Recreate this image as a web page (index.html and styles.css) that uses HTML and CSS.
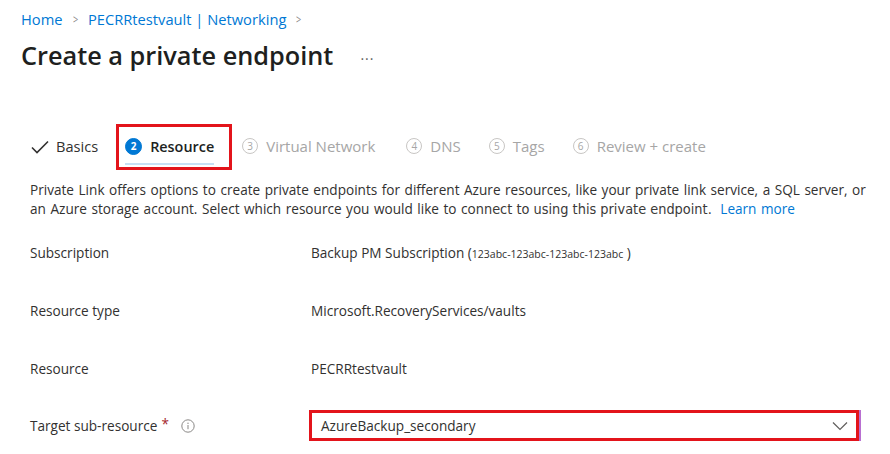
FILE: index.html
```html
<!DOCTYPE html>
<html>
<head>
<meta charset="utf-8">
<link rel="stylesheet" href="styles.css">
</head>
<body>
<div class="page">
  <nav class="crumbs">
    <a class="crumb">Home</a><span class="sep">&gt;</span>
    <a class="crumb">PECRRtestvault | Networking</a><span class="sep">&gt;</span>
  </nav>
  <header class="title-row">
    <h1 class="title">Create a private endpoint</h1>
    <span class="more">···</span>
  </header>

  <div class="tabs">
    <div class="tab done">
      <svg class="check" viewBox="0 0 18 14" width="18" height="14"><path d="M1 7.5 L6 12.5 L17 1.5" fill="none" stroke="#323130" stroke-width="1.6"/></svg>
      <span>Basics</span>
    </div>
    <div class="tab active">
      <span class="num filled">2</span>
      <span>Resource</span>
    </div>
    <div class="tab off"><span class="num">3</span><span>Virtual Network</span></div>
    <div class="tab off"><span class="num">4</span><span>DNS</span></div>
    <div class="tab off"><span class="num">5</span><span>Tags</span></div>
    <div class="tab off"><span class="num">6</span><span>Review + create</span></div>
  </div>

  <p class="intro">Private Link offers options to create private endpoints for different Azure resources, like your private link service, a SQL server, or an Azure storage account. Select which resource you would like to co<span class="odd">nnect to using this private endpoint.</span> <a class="link">Learn more</a></p>

  <div class="rows">
    <div class="row"><div class="label">Subscription</div><div class="value">Backup PM Subscription (<span class="small">123abc-123abc-123abc-123abc</span> )</div></div>
    <div class="row"><div class="label">Resource type</div><div class="value">Microsoft.RecoveryServices/vaults</div></div>
    <div class="row"><div class="label">Resource</div><div class="value">PECRRtestvault</div></div>
    <div class="row"><div class="label">Target sub-resource <span class="req">*</span>
      <svg class="info" viewBox="0 0 14 14" width="14" height="14"><circle cx="7" cy="7" r="6.2" fill="none" stroke="#8a8886" stroke-width="1"/><rect x="6.5" y="6" width="1" height="4.2" fill="#8a8886"/><circle cx="7" cy="4.2" r="0.7" fill="#8a8886"/></svg></div>
      <div class="select"><span>AzureBackup_secondary</span>
        <svg class="chev" viewBox="0 0 16 10" width="16" height="10"><path d="M1 1.5 L8 8.5 L15 1.5" fill="none" stroke="#605e5c" stroke-width="1.2"/></svg>
      </div>
    </div>
  </div>
</div>
</body>
</html>
```

FILE: styles.css
```css
* { box-sizing: border-box; }
html, body { margin: 0; padding: 0; background: #fff; }
body {
  font-family: "Open Sans", "Noto Sans", sans-serif;
  font-size: 13.6px;
  color: #323130;
  width: 890px;
  height: 454px;
  overflow: hidden;
}
.page { padding: 8px 0 0 21px; }
.crumbs { display: flex; align-items: center; height: 22px; font-size: 14.7px; }
.crumb { color: #0078d4; }
.sep { color: #8a8886; margin: 0 9px; font-size: 13px; transform: scaleX(0.7); display: inline-block; }
.title-row { display: flex; align-items: center; margin-top: 8px; height: 34px; }
.title { margin: 0; font-size: 25.3px; font-weight: 600; color: #201f1e; }
.more { margin-left: 27px; color: #605e5c; font-size: 14px; letter-spacing: 1px; margin-top: 6px; }

.tabs { display: flex; align-items: center; margin-top: 61px; padding-left: 10px; height: 26px; }
.tab { display: flex; align-items: center; gap: 8px; font-size: 14.6px; position: relative; }
.tab.done { margin-right: 29px; gap: 7px; }
.tab.done .check { margin-top: 1px; }
.tab.active { color: #201f1e; font-weight: 600; margin-right: 29px; font-size: 14.4px; left: -2px; }
.tab.active::before {
  content: ""; position: absolute; left: -9px; right: -18px; top: -13px; bottom: -14px;
  border: 3px solid #e3141b;
}
.tab.active::after {
  content: ""; position: absolute; left: 0; right: 0; bottom: -9px; height: 2px; background: #c7e0f4;
}
.tab.off { color: #a6a6a6; font-size: 15px; }
.tab.off:nth-child(3) { margin-left: -3px; margin-right: 31px; }
.tab.off:nth-child(4) { margin-right: 28px; }
.tab.off:nth-child(5) { margin-right: 28px; }
.num {
  width: 16px; height: 16px; border-radius: 50%; border: 1px solid #c8c6c4;
  display: inline-flex; align-items: center; justify-content: center;
  font-size: 10px; font-weight: 400; color: #a6a6a6;
}
.num.filled { width: 17px; height: 17px; background: #0078d4; border-color: #0078d4; color: #fff; font-weight: 700; }

.intro { margin: 21px 0 0 9px; width: 846px; line-height: 19px; word-spacing: 1px; }
.odd { font-family: "DejaVu Sans Condensed", "DejaVu Sans", sans-serif; font-stretch: condensed; font-size: 14.4px; line-height: 14px; color: #3b3a39; word-spacing: 0; }
.link { color: #0078d4; margin-left: 4px; }

.rows { margin-left: 9px; margin-top: 6px; display: flex; flex-direction: column; }
.row { display: flex; align-items: center; height: 57.7px; }
.label { width: 281px; display: flex; align-items: center; }
.req { color: #a4262c; margin-left: 4px; margin-top: -4px; }
.info { margin-left: 12px; }
.small { font-size: 10.5px; }
.select {
  margin-left: -2px; width: 550px; height: 31px;
  border: 3px solid #e3141b; box-shadow: 2px 0 0 #b86fd1;
  display: flex; align-items: center; justify-content: space-between;
  padding: 0 8px 0 9px;
}
```
